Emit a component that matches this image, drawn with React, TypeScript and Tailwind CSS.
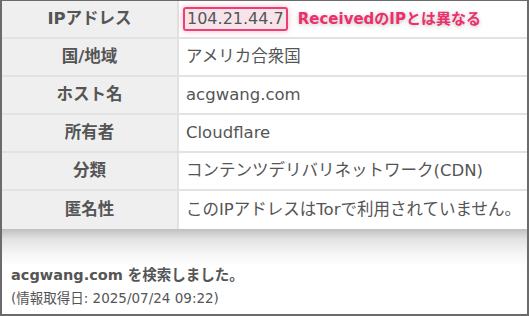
import React from "react";

const rows: [string, React.ReactNode][] = [
  ["国/地域", "アメリカ合衆国"],
  ["ホスト名", "acgwang.com"],
  ["所有者", "Cloudflare"],
  ["分類", "コンテンツデリバリネットワーク(CDN)"],
  ["匿名性", "このIPアドレスはTorで利用されていません。"],
];

export default function App() {
  return (
    <div
      className="w-[529px] h-[316px] bg-white border-x-2 border-b-2 border-t border-[#6b6b6b] overflow-hidden flex flex-col text-[#555]"
      style={{ fontFamily: '"DejaVu Sans", "Noto Sans CJK JP", sans-serif' }}
    >
      <div className="flex flex-col">
        <div className="flex h-[38px] border-b-2 border-[#e2e2e2]">
          <div className="w-[177px] bg-[#efefef] border-r-2 border-[#e2e2e2] flex items-center justify-center font-bold text-[16.5px]">
            IPアドレス
          </div>
          <div className="flex-1 flex items-center pl-[4px] gap-[10px]">
            <span className="px-[2px] h-[24px] flex items-center rounded-[3px] border-2 border-[#ec3f74] bg-[#f7e4ea] text-[16px] shadow-[0_0_6px_rgba(236,63,116,0.35)]">
              104.21.44.7
            </span>
            <span className="text-[#ee2f6c] font-bold text-[15px] [text-shadow:0_1px_4px_rgba(0,0,0,0.25)]">
              ReceivedのIPとは異なる
            </span>
          </div>
        </div>
        {rows.map(([k, v], i) => (
          <div
            key={k}
            className={
              i < rows.length - 1
                ? "flex h-[38px] border-b-2 border-[#e2e2e2]"
                : "flex h-[38px]"
            }
          >
            <div className="w-[177px] bg-[#efefef] border-r-2 border-[#e2e2e2] flex items-center justify-center font-bold text-[16.5px]">
              {k}
            </div>
            <div className="flex-1 flex items-center pl-[7px] text-[16.5px]">{v}</div>
          </div>
        ))}
      </div>
      <div className="h-[36px] bg-[linear-gradient(to_bottom,#bfbfbf_0px,#e2e2e2_10px,#f5f5f5_24px,#ffffff_38px)]" />
      <div className="pl-[9px] flex flex-col">
        <div className="font-bold text-[14.5px] leading-[20px]">acgwang.com を検索しました。</div>
        <div className="text-[13.5px] leading-[20px] mt-[3px]">(情報取得日: 2025/07/24 09:22)</div>
      </div>
    </div>
  );
}
